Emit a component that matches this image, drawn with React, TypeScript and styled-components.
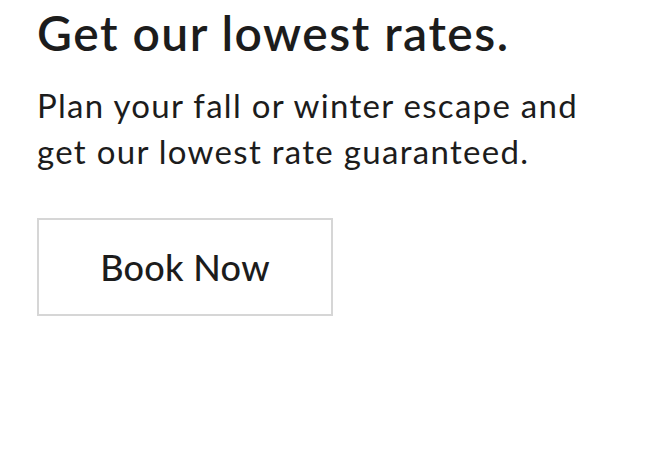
import React from "react";
import styled, { createGlobalStyle } from "styled-components";

const Global = createGlobalStyle`
  html, body { margin: 0; padding: 0; background: #ffffff; }
  body { font-family: Lato, "Open Sans", sans-serif; color: #1c1c1c; }
`;

const Section = styled.section`
  display: flex;
  flex-direction: column;
  align-items: flex-start;
  padding: 4px 37px 0;
`;

const Heading = styled.h1`
  margin: 0;
  font-size: 48px;
  line-height: 58px;
  font-weight: 600;
  letter-spacing: 1.5px;
`;

const Text = styled.p`
  margin: 20px 0 0;
  font-size: 33px;
  line-height: 46px;
  font-weight: 400;
  letter-spacing: 1.3px;
  max-width: 590px;
`;

const Button = styled.button`
  margin-top: 44px;
  width: 296px;
  height: 98px;
  border: 2px solid #d6d6d6;
  background: #fff;
  color: #1c1c1c;
  font-family: inherit;
  font-size: 36px;
  font-weight: 500;
  letter-spacing: 0.3px;
  cursor: pointer;
`;

export default function App() {
  return (
    <>
      <Global />
      <Section>
        <Heading>Get our lowest rates.</Heading>
        <Text>Plan your fall or winter escape and get our lowest rate guaranteed.</Text>
        <Button>Book Now</Button>
      </Section>
    </>
  );
}
